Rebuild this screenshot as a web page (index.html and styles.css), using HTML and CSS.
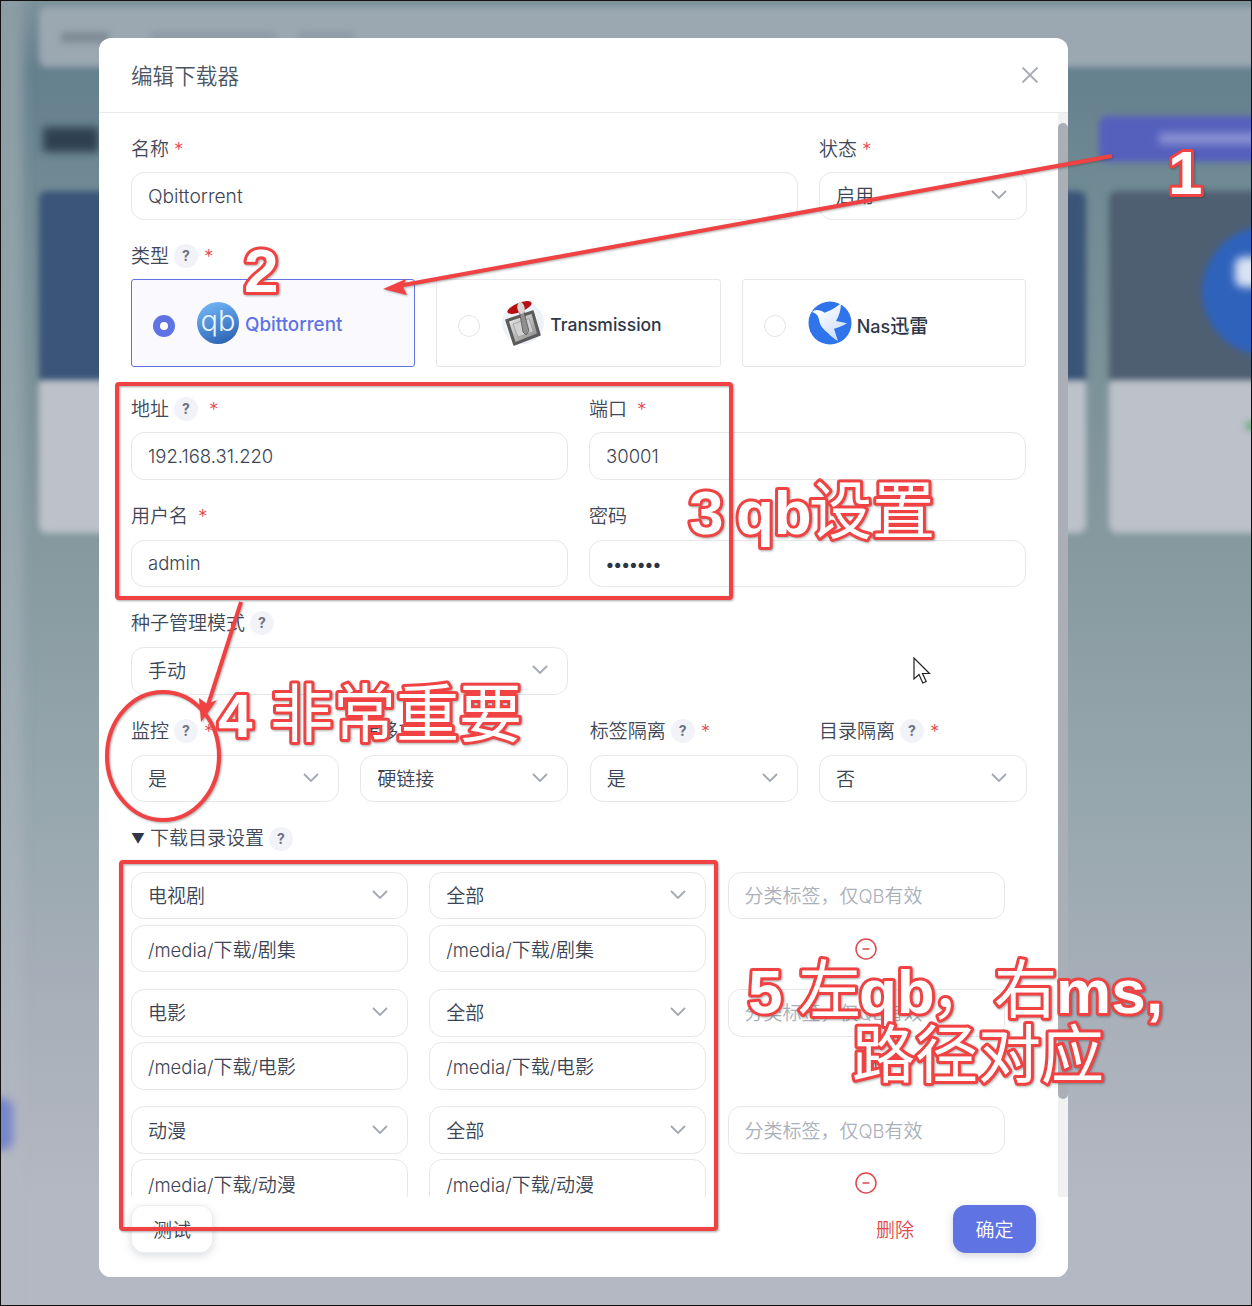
FILE: index.html
```html
<!DOCTYPE html>
<html lang="zh-CN">
<head>
<meta charset="utf-8">
<title>编辑下载器</title>
<link rel="stylesheet" href="styles.css">
</head>
<body>
<div class="screen">
  <div class="backdrop" aria-hidden="true">
    <div class="bg bg-left"></div>
    <div class="bg bg-top"></div>
    <div class="bg bg-top-t1"></div>
    <div class="bg bg-top-t2"></div>
    <div class="bg bg-top-t3"></div>
    <div class="bg bg-heading"></div>
    <div class="bg bg-btn"></div>
    <div class="bg bg-btn-t"></div>
    <div class="bg bg-card-a"></div>
    <div class="bg bg-card-b"></div>
    <div class="bg bg-circle"></div>
    <div class="bg bg-bird"></div>
    <div class="bg bg-foot-a"></div>
    <div class="bg bg-foot-b"></div>
    <div class="bg bg-green"></div>
    <div class="bg bg-spot"></div>
  </div>

  <section class="modal">
    <header class="modal-head">
      <h2 class="modal-title">编辑下载器</h2>
      <svg class="close" viewBox="0 0 18 18"><path d="M1.5 1.5 16.5 16.5M16.5 1.5 1.5 16.5"/></svg>
    </header>

    <div class="modal-main">
      <div class="form">
        <div class="grid-4 grid-first">
          <div class="field span-3">
            <div class="label">名称<span class="star">*</span></div>
            <div class="box"><span class="lat lat-name">Qbittorrent</span></div>
          </div>
          <div class="field">
            <div class="label">状态<span class="star">*</span></div>
            <div class="box">启用<svg class="chev" viewBox="0 0 16 9"><path d="M1 1l7 7 7-7"/></svg></div>
          </div>
        </div>

        <div class="field field-types">
          <div class="label">类型<span class="help">?</span><span class="star">*</span></div>
          <div class="types">
            <div class="type type-on">
              <span class="radio radio-on"></span>
              <svg class="logo" viewBox="0 0 42 42">
                <defs><linearGradient id="qbg" x1="0.3" y1="0" x2="0.7" y2="1"><stop offset="0" stop-color="#72b4f5"/><stop offset="1" stop-color="#2b63b4"/></linearGradient></defs>
                <circle cx="21" cy="21" r="21" fill="url(#qbg)"/>
                <text class="qb-mark" x="21" y="29">qb</text>
              </svg>
              <span class="type-name type-name-qb">Qbittorrent</span>
            </div>
            <div class="type">
              <span class="radio"></span>
              <svg class="logo" viewBox="0 0 42 42">
                <defs><linearGradient id="trg" x1="0" y1="0" x2="1" y2="1"><stop offset="0" stop-color="#efefef"/><stop offset="1" stop-color="#858585"/></linearGradient></defs>
                <circle cx="21" cy="21" r="21" fill="#eef2f8"/>
                <polygon points="4,18 31,9 38,33 12,43" fill="#5b5b5b" stroke="#5b5b5b" stroke-width="1.500" stroke-linejoin="round"/>
                <polygon points="7,19.500 29.500,12 35,31.500 13.500,40" fill="url(#trg)"/>
                <polygon points="11,22 27,16.500 31,29.500 16,35" fill="#d2d2d2" stroke="#9a9a9a" stroke-width=".8"/>
                <path d="M17 7l4-1 6 23-3 4-3-3z" fill="#8f8f8f" stroke="#4d4d4d" stroke-width=".7"/>
                <ellipse cx="17.500" cy="5.500" rx="13" ry="4.500" transform="rotate(-22 17.500 5.500)" fill="#b60f14"/>
                <ellipse cx="19" cy="6" rx="3.600" ry="6" transform="rotate(-12 19 6)" fill="#d6d6d6"/>
              </svg>
              <span class="type-name">Transmission</span>
            </div>
            <div class="type">
              <span class="radio"></span>
              <svg class="logo logo-wide" viewBox="0 0 44 44">
                <defs><linearGradient id="xlg" x1="0.2" y1="0.1" x2="0.8" y2="1"><stop offset="0" stop-color="#ffffff"/><stop offset="1" stop-color="#c6daf7"/></linearGradient></defs>
                <circle cx="22" cy="22" r="21.500" fill="#2f74ea"/>
                <path d="M4 11C5.500 9.800 7 9 8.500 9 11.500 9 14 10 16.700 11.700 22 10 28 6.500 33 2.300 33 9 31 15 28 20L39 22.300C35 25 30.500 26.700 26 27.700L30 40C26.500 38 23 35.500 20 32 15.500 28.500 12.500 25 11.700 21.700 11 18.500 10.500 16 9.300 14.300 8 12.800 6 11.600 4 11z" fill="url(#xlg)"/>
              </svg>
              <span class="type-name"><span class="lat-nas">Nas</span><span class="han-nas">迅雷</span></span>
            </div>
          </div>
        </div>

        <div class="grid-2 grid-addr">
          <div class="field">
            <div class="label">地址<span class="help">?</span><span class="star star-far">*</span></div>
            <div class="box"><span class="lat">192.168.31.220</span></div>
          </div>
          <div class="field">
            <div class="label">端口<span class="star star-far">*</span></div>
            <div class="box"><span class="lat">30001</span></div>
          </div>
          <div class="field">
            <div class="label">用户名<span class="star star-far">*</span></div>
            <div class="box"><span class="lat">admin</span></div>
          </div>
          <div class="field">
            <div class="label">密码</div>
            <div class="box box-pass">•••••••</div>
          </div>
        </div>

        <div class="grid-2">
          <div class="field">
            <div class="label">种子管理模式<span class="help">?</span></div>
            <div class="box">手动<svg class="chev" viewBox="0 0 16 9"><path d="M1 1l7 7 7-7"/></svg></div>
          </div>
        </div>

        <div class="grid-4">
          <div class="field">
            <div class="label">监控<span class="help">?</span><span class="star">*</span></div>
            <div class="box">是<svg class="chev" viewBox="0 0 16 9"><path d="M1 1l7 7 7-7"/></svg></div>
          </div>
          <div class="field">
            <div class="label">转移方式</div>
            <div class="box">硬链接<svg class="chev" viewBox="0 0 16 9"><path d="M1 1l7 7 7-7"/></svg></div>
          </div>
          <div class="field">
            <div class="label">标签隔离<span class="help">?</span><span class="star">*</span></div>
            <div class="box">是<svg class="chev" viewBox="0 0 16 9"><path d="M1 1l7 7 7-7"/></svg></div>
          </div>
          <div class="field">
            <div class="label">目录隔离<span class="help">?</span><span class="star">*</span></div>
            <div class="box">否<svg class="chev" viewBox="0 0 16 9"><path d="M1 1l7 7 7-7"/></svg></div>
          </div>
        </div>

        <div class="dirs">
          <div class="label label-dirs"><span class="tri">▼</span>下载目录设置<span class="help">?</span></div>
          <div class="dir-group">
            <div class="box">电视剧<svg class="chev" viewBox="0 0 16 9"><path d="M1 1l7 7 7-7"/></svg></div>
            <div class="box">全部<svg class="chev" viewBox="0 0 16 9"><path d="M1 1l7 7 7-7"/></svg></div>
            <div class="box box-ph"><span>分类标签，仅<span class="lat">QB</span>有效</span></div>
            <div class="box"><span><span class="lat">/media/</span>下载<span class="lat">/</span>剧集</span></div>
            <div class="box"><span><span class="lat">/media/</span>下载<span class="lat">/</span>剧集</span></div>
            <div class="minus"><svg viewBox="0 0 22 22"><circle cx="11" cy="11" r="10"/><path d="M7.500 11h7"/></svg></div>
          </div>
          <div class="dir-group">
            <div class="box">电影<svg class="chev" viewBox="0 0 16 9"><path d="M1 1l7 7 7-7"/></svg></div>
            <div class="box">全部<svg class="chev" viewBox="0 0 16 9"><path d="M1 1l7 7 7-7"/></svg></div>
            <div class="box box-ph"><span>分类标签，仅<span class="lat">QB</span>有效</span></div>
            <div class="box"><span><span class="lat">/media/</span>下载<span class="lat">/</span>电影</span></div>
            <div class="box"><span><span class="lat">/media/</span>下载<span class="lat">/</span>电影</span></div>
            <div class="minus"><svg viewBox="0 0 22 22"><circle cx="11" cy="11" r="10"/><path d="M7.500 11h7"/></svg></div>
          </div>
          <div class="dir-group">
            <div class="box">动漫<svg class="chev" viewBox="0 0 16 9"><path d="M1 1l7 7 7-7"/></svg></div>
            <div class="box">全部<svg class="chev" viewBox="0 0 16 9"><path d="M1 1l7 7 7-7"/></svg></div>
            <div class="box box-ph"><span>分类标签，仅<span class="lat">QB</span>有效</span></div>
            <div class="box"><span><span class="lat">/media/</span>下载<span class="lat">/</span>动漫</span></div>
            <div class="box"><span><span class="lat">/media/</span>下载<span class="lat">/</span>动漫</span></div>
            <div class="minus"><svg viewBox="0 0 22 22"><circle cx="11" cy="11" r="10"/><path d="M7.500 11h7"/></svg></div>
          </div>
        </div>
      </div>
      <div class="track"><div class="thumb"></div></div>
    </div>

    <footer class="modal-foot">
      <button class="btn btn-test">测试</button>
      <button class="btn btn-del">删除</button>
      <button class="btn btn-ok">确定</button>
    </footer>
  </section>

  <svg class="pointer" viewBox="0 0 20 28"><path d="M1 1V22L6 17.500 9.800 26 13.200 24.500 9.500 16.500H16.500z"/></svg>

  <svg class="notes" viewBox="0 0 1252 1306">
    <g class="marks">
      <path d="M1112 156 398 286"/>
      <rect x="117" y="384" width="614" height="214" rx="2"/>
      <path d="M241 602 207 708"/>
      <ellipse cx="163" cy="756" rx="56" ry="64"/>
      <rect x="121" y="862" width="595" height="367" rx="2"/>
    </g>
    <path class="arrowhead" d="M383 289 406 279 403 287 407 295z"/>
    <path class="arrowhead" d="M201 722 199 698 207 704 217 700z"/>
    <g class="note">
      <text class="digit" x="1168" y="194">1</text>
      <text class="digit" x="244" y="292">2</text>
      <text class="digit" x="689" y="534">3</text>
      <text class="digit" x="736" y="534">qb</text>
      <text class="han" x="809" y="533">设置</text>
      <text class="digit" x="218" y="737">4</text>
      <text class="han" x="270" y="736">非常重要</text>
      <text class="digit" x="748" y="1013">5</text>
      <text class="han" x="798" y="1012">左</text>
      <text class="digit" x="859" y="1013">qb</text>
      <text class="han" x="930" y="1012">，</text>
      <text class="han" x="994" y="1012">右</text>
      <text class="digit" x="1056" y="1013">ms</text>
      <text class="digit" x="1146" y="1013">,</text>
      <text class="han" x="852" y="1077">路径对应</text>
    </g>
  </svg>
</div>
</body>
</html>
```
FILE: styles.css
```css
* { box-sizing: border-box; }

html, body { margin: 0; padding: 0; }

body {
  font-family: Inter, "Noto Sans CJK SC", sans-serif;
  font-size: 19px;
  font-weight: 350;
  color: #3b4455;
}

.screen {
  position: relative;
  width: 1252px;
  height: 1306px;
  overflow: hidden;
  padding: 38px 0 0 99px;
  border: 1px solid #111;
  background: #b3b8c2;
}

/* blurred page behind the dialog */
.backdrop {
  position: absolute;
  inset: 0;
  overflow: hidden;
  background: linear-gradient(180deg, #7d929b 0, #65808e 70px, #6f8a93 180px, #86999f 540px, #97a7ae 800px, #a7afb9 1000px, #b4b8c2 1200px);
}

.bg { position: absolute; filter: blur(3px); }
.bg-left { left: -10px; top: -10px; width: 32px; height: 1330px; background: linear-gradient(180deg, #8c9ca4 0, #92a3ab 400px, #a2aeb7 800px, #b4b8c2 1200px); filter: blur(6px); }
.bg-top { left: 38px; top: 6px; width: 1230px; height: 60px; background: #9ba8b2; border-radius: 8px; }
.bg-top-t1 { left: 60px; top: 31px; width: 48px; height: 11px; background: #7f8c96; }
.bg-top-t2 { left: 150px; top: 31px; width: 125px; height: 9px; background: #8e9aa4; }
.bg-top-t3 { left: 298px; top: 31px; width: 55px; height: 9px; background: #8e9aa4; }
.bg-heading { left: 42px; top: 126px; width: 56px; height: 25px; background: #2f4150; filter: blur(4px); }
.bg-btn { left: 1098px; top: 115px; width: 170px; height: 46px; background: #5560bd; border-radius: 8px; }
.bg-btn-t { left: 1158px; top: 132px; width: 100px; height: 11px; background: #8c93d4; filter: blur(4px); }
.bg-card-a { left: 38px; top: 190px; width: 1047px; height: 190px; background: #3a5578; border-radius: 8px 8px 0 0; }
.bg-card-b { left: 1108px; top: 190px; width: 160px; height: 190px; background: #4f5f72; border-radius: 8px 8px 0 0; }
.bg-circle { left: 1201px; top: 225px; width: 130px; height: 130px; background: #2f62bb; border-radius: 50%; }
.bg-bird { left: 1234px; top: 256px; width: 30px; height: 30px; background: #d9e3f3; border-radius: 8px; filter: blur(4px); }
.bg-foot-a { left: 38px; top: 380px; width: 1047px; height: 152px; background: #bdc1ca; border-radius: 0 0 8px 8px; }
.bg-foot-b { left: 1108px; top: 380px; width: 160px; height: 152px; background: #bdc1ca; border-radius: 0 0 8px 8px; }
.bg-green { left: 1244px; top: 420px; width: 12px; height: 10px; background: #6fae82; border-radius: 50%; }
.bg-spot { left: -30px; top: 1097px; width: 42px; height: 52px; background: #7785cb; border-radius: 10px; filter: blur(4px); }

/* dialog */
.modal {
  position: relative;
  width: 969px;
  height: 1239px;
  margin-top: -1px;
  margin-left: -1px;
  background: #fff;
  border-radius: 12px;
  overflow: hidden;
  display: flex;
  flex-direction: column;
}

.modal-head {
  flex: none;
  height: 75px;
  padding: 0 29px 0 32px;
  display: flex;
  align-items: center;
  justify-content: space-between;
  border-bottom: 1px solid #e8e9ec;
}

.modal-title {
  margin: 2px 0 0;
  font-size: 21.6px;
  font-weight: 350;
  line-height: 30px;
  color: #4b5563;
}

.close { width: 18px; height: 18px; }
.close path { fill: none; stroke: #a9adb3; stroke-width: 1.8; }

.modal-main {
  flex: none;
  height: 1084px;
  display: flex;
  overflow: hidden;
}

.form {
  width: 959px;
  flex: none;
  padding: 24px 32px 0;
  display: flex;
  flex-direction: column;
  gap: 24px;
}

.track { flex: none; width: 10px; background: #f1f1f1; }
.thumb { margin-top: 10px; height: 976px; background: #aaafb7; border-radius: 5px; }

.grid-4 { display: grid; grid-template-columns: repeat(4, 208px); column-gap: 21.33px; }
.grid-2 { display: grid; grid-template-columns: repeat(2, 1fr); column-gap: 21px; }
.grid-addr { row-gap: 24px; margin-top: 6px; }
.span-3 { grid-column: span 3; }

.field { display: flex; flex-direction: column; gap: 12px; min-width: 0; }
.grid-first .field { gap: 11px; }
.grid-addr .field:nth-child(-n+2) { gap: 11px; }
.field-types { gap: 11.5px; }

.label {
  height: 24px;
  padding-top: 2px;
  line-height: 22px;
  display: flex;
  align-items: center;
  color: #3f4858;
  white-space: nowrap;
}

.star { margin-left: 5px; color: #e5484d; font-size: 19px; }
.help + .star { margin-left: 6px; }
.star-far { margin-left: 10px; }
.help + .star-far { margin-left: 11px; }

.help {
  width: 24px;
  height: 24px;
  flex: none;
  margin-top: -2px;
  margin-left: 5px;
  border-radius: 50%;
  background: #f1f3f8;
  color: #6b7280;
  font-size: 14px;
  font-weight: 700;
  line-height: 24px;
  text-align: center;
}

.box {
  height: 47.5px;
  padding: 0 16px;
  display: flex;
  align-items: center;
  justify-content: space-between;
  border: 1px solid #e6e7ea;
  border-radius: 13px;
  background: #fff;
  color: #3b4455;
  white-space: nowrap;
  min-width: 0;
}

.box:has(.chev), .box-ph { padding-bottom: 2px; }

.lat { font-size: 18.5px; }
.lat-name { font-size: 19.2px; }

.box-ph { color: #aab0b9; }
.box-pass { font-size: 16.5px; font-weight: 700; padding-top: 2px; color: #2c3446; }

.chev { width: 16px; height: 9px; flex: none; margin-right: 3px; }
.chev path { fill: none; stroke: #a3a9b3; stroke-width: 1.8; }

/* type cards */
.types { display: grid; grid-template-columns: repeat(3, 1fr); column-gap: 21px; }

.type {
  height: 88px;
  padding: 2px 0 0 21px;
  display: flex;
  align-items: center;
  border: 1px solid #e6e7ea;
  border-radius: 3px;
  background: #fff;
}

.type-on { border-color: #5f73e3; background: #f9f9fe; }
.type-on .type-name { color: #5f73e3; }

.radio {
  width: 22px;
  height: 22px;
  margin: 4px 22px 0 0;
  flex: none;
  border-radius: 50%;
  border: 1px solid #e2e4e8;
  background: #fff;
}

.radio-on { border: 7px solid #5f73e3; }

.logo { width: 42px; height: 42px; flex: none; margin-right: 6px; margin-bottom: 2px; overflow: visible; }
.logo-wide { width: 44px; height: 44px; margin-right: 5px; }

.qb-mark {
  font-family: Inter, sans-serif;
  font-size: 29px;
  font-weight: 300;
  text-anchor: middle;
  fill: #eaf4ff;
}

.type-name { font-size: 17.5px; font-weight: 500; color: #2f3749; white-space: nowrap; }
.type-name-qb { font-size: 18.8px; }
.lat-nas { font-size: 18px; }
.han-nas { font-size: 19px; }

/* directory rows */
.dirs { display: flex; flex-direction: column; gap: 16.75px; }
.label-dirs { margin-bottom: 5px; }
.tri { font-size: 14px; width: 19px; color: #2f3749; }
.label-dirs .help { margin-top: 0; }

.dir-group {
  width: 874px;
  flex: none;
  display: grid;
  grid-template-columns: repeat(3, 277px);
  column-gap: 21.25px;
  row-gap: 5.5px;
}

.minus { height: 47.5px; display: flex; align-items: center; justify-content: center; }
.minus svg { width: 22px; height: 22px; }
.minus circle, .minus path { fill: none; stroke: #dc4a4f; stroke-width: 1.5; }

/* footer */
.modal-foot {
  flex: 1;
  padding: 8px 32px 0;
  display: flex;
  align-items: flex-start;
  background: #fff;
}

.btn {
  height: 47.5px;
  padding: 0;
  border: 0;
  border-radius: 13px;
  font: inherit;
  background: none;
  white-space: nowrap;
}

.btn-test { width: 82px; margin-right: auto; background: #fff; color: #3f4858; border: 1px solid #eceef1; box-shadow: 0 3px 8px rgba(60, 70, 90, .18); }
.btn-del { color: #df4a4e; margin-right: 39px; }
.btn-ok { width: 83px; background: #5f73e3; color: #fff; box-shadow: 0 3px 8px rgba(60, 70, 90, .22); }

/* mouse pointer caught in the screenshot */
.pointer {
  position: absolute;
  left: 912px;
  top: 656px;
  width: 20px;
  height: 28px;
}

.pointer path { fill: #fff; stroke: #222; stroke-width: 1.2; stroke-linejoin: miter; }

/* annotations drawn on top of the screenshot */
.notes {
  position: absolute;
  left: -1px;
  top: -1px;
  width: 1252px;
  height: 1306px;
  pointer-events: none;
  filter: drop-shadow(1px 1px 1px rgba(60, 60, 60, .45));
}

.marks > * { fill: none; stroke: #f04242; stroke-width: 4; }
.arrowhead { fill: #f04242; }

.note text {
  fill: #fff;
  stroke: #f04242;
  stroke-width: 6;
  stroke-linejoin: round;
  paint-order: stroke;
}

.digit { font-family: "Liberation Sans", sans-serif; font-size: 62px; font-weight: 700; }
.han { font-family: "Noto Sans CJK SC", sans-serif; font-size: 63px; font-weight: 400; }
```
